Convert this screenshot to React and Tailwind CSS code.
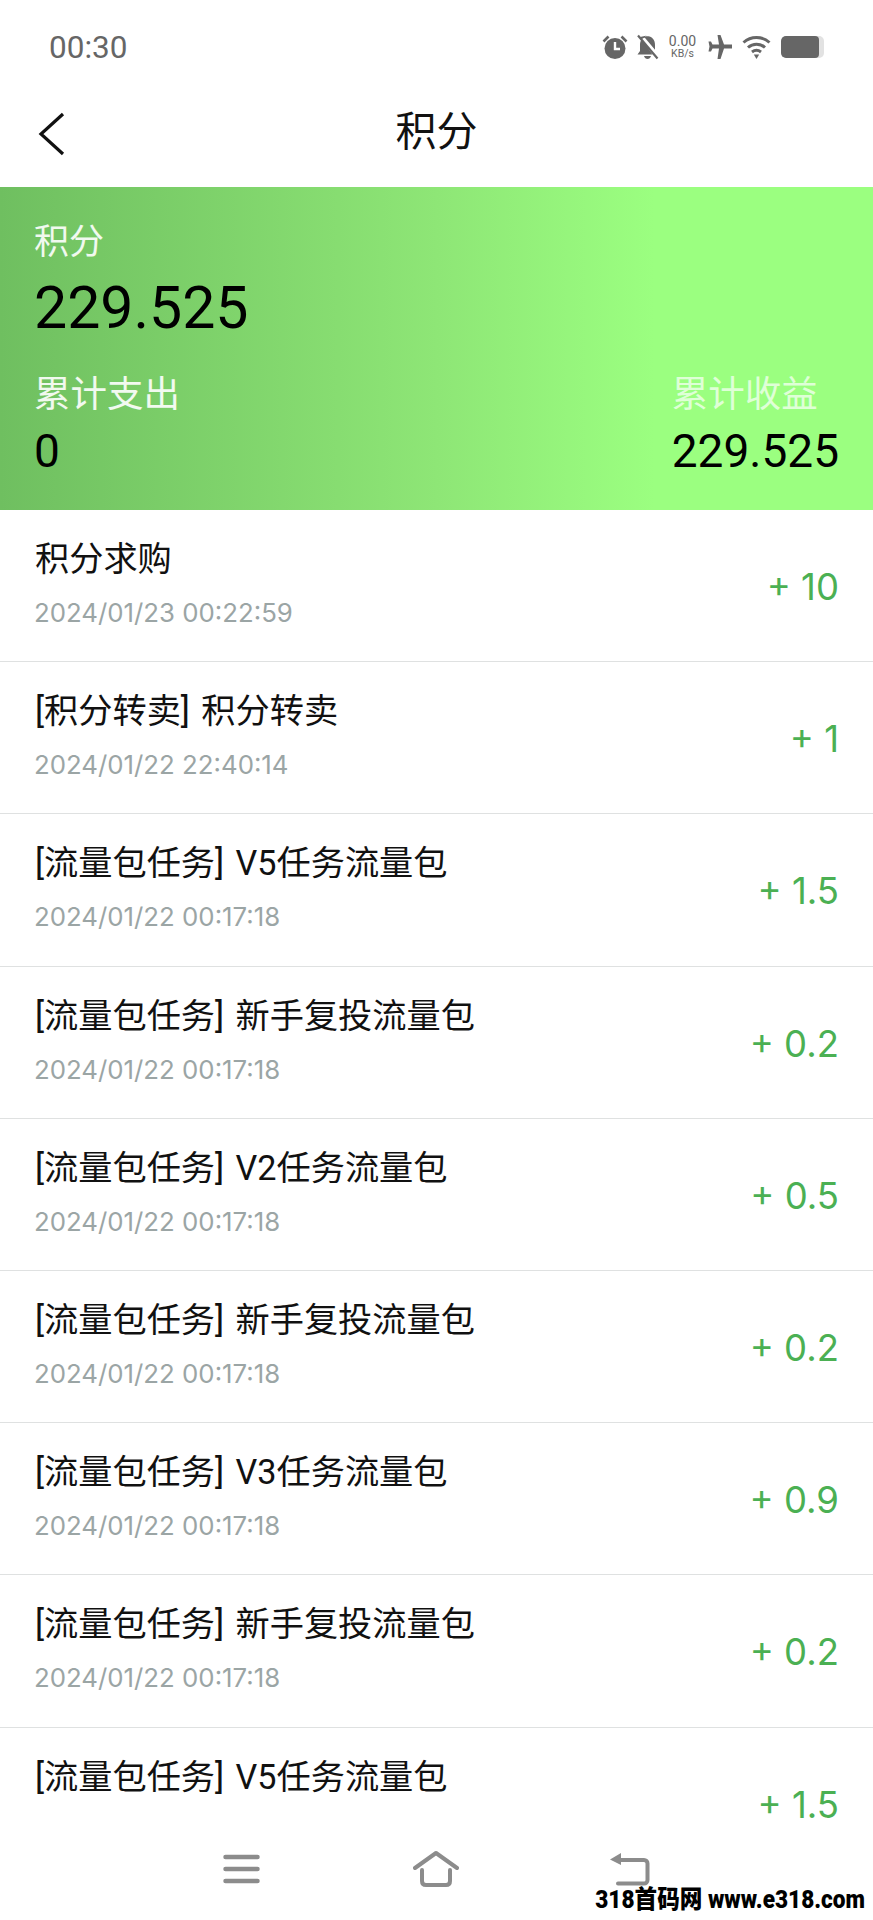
const FONT = 'font-[Roboto,"Noto_Sans_CJK_SC",sans-serif]';
const NARROW_ONE = 'font-[Inter,"Noto_Sans_CJK_SC",sans-serif]';

// the bottom bar covers the date of the last row, so it has none and is shorter
const records = [
  { title: '积分求购', time: '2024/01/23 00:22:59', amount: '+ 10' },
  { title: '[积分转卖] 积分转卖', time: '2024/01/22 22:40:14', amount: '+ 1' },
  { title: '[流量包任务] V5任务流量包', time: '2024/01/22 00:17:18', amount: '+ 1.5' },
  { title: '[流量包任务] 新手复投流量包', time: '2024/01/22 00:17:18', amount: '+ 0.2' },
  { title: '[流量包任务] V2任务流量包', time: '2024/01/22 00:17:18', amount: '+ 0.5' },
  { title: '[流量包任务] 新手复投流量包', time: '2024/01/22 00:17:18', amount: '+ 0.2' },
  { title: '[流量包任务] V3任务流量包', time: '2024/01/22 00:17:18', amount: '+ 0.9' },
  { title: '[流量包任务] 新手复投流量包', time: '2024/01/22 00:17:18', amount: '+ 0.2' },
  { title: '[流量包任务] V5任务流量包', time: '', amount: '+ 1.5' },
];

function StatusIcons() {
  return (
    <div className="flex items-center text-[#666666]">
      {/* alarm */}
      <svg width="26" height="26" viewBox="0 0 26 26" className="mr-[8px]">
        <circle cx="13" cy="14.5" r="10.5" fill="currentColor" />
        <path d="M13 8v7h5" fill="none" stroke="#fff" strokeWidth="2.4" />
        <path d="M1.5 7.5 6.5 2.5M24.5 7.5l-5-5" fill="none" stroke="currentColor" strokeWidth="2.6" />
      </svg>
      {/* muted bell */}
      <svg width="23" height="26" viewBox="0 0 23 26" className="mr-[8px]">
        <path d="M11 1.5c-1.2 0-2 .8-2 2C5.500 4.500 4 7.500 4 11v6l-2.500 3.500h15L4 3z" fill="currentColor" />
        <path d="M8 2.800c1-.5 5-1.500 8 1 2.500 2 3 5 3 7.500v4.500z" fill="currentColor" />
        <path d="M8 22h7c-.5 2-2 3-3.500 3S8.500 24 8 22z" fill="currentColor" />
        <path d="M2 1.500 21.500 24.500" stroke="currentColor" strokeWidth="2.2" />
      </svg>
      {/* network speed */}
      <div className="w-[31px] mr-[10px] flex flex-col items-center leading-none">
        <span className="text-[14px] leading-[14px]">0.00</span>
        <span className="text-[10.500px] leading-[12px]">KB/s</span>
      </div>
      {/* airplane */}
      <svg width="24" height="26" viewBox="0 0 24 26" className="mr-[10px]">
        <path d="M9.500 1H12.500L16 10.500H24V14.500H16L12.500 25H9.500L11 14.500H4.500L3 17.500H.5L1.500 12.500.5 7.500H3L4.500 10.500H11z" fill="currentColor" />
      </svg>
      {/* wifi */}
      <svg width="29" height="24" viewBox="0 0 29 24" className="mr-[10px]">
        <path d="M1.500 7.500C9 .8 20 .8 27.500 7.500M6 12.500c5-4.500 12-4.500 17 0M10 17c2.800-2.200 6.200-2.200 9 0" fill="none" stroke="currentColor" strokeWidth="3" />
        <path d="M11.800 19.500h5.400L14.500 24z" fill="currentColor" />
      </svg>
      {/* battery */}
      <div className="w-[43px] h-[22px] rounded-[5px] bg-[#e2e2e2] overflow-hidden">
        <div className="w-[38px] h-full rounded-[4px] bg-[#666666]" />
      </div>
    </div>
  );
}

function RecordRow({ record }) {
  return (
    <div className={`${record.time ? 'h-[152.200px] border-b border-[#dfe1e1]' : 'h-[92px]'} shrink-0 flex items-start justify-between pl-[34px] pr-[34px]`}>
      <div className="pt-[28px]">
        <div className="pl-[1px] text-[34.200px] leading-[42px] text-[#111111] [word-spacing:3px]">{record.title}</div>
        {record.time && (
          <div className={`mt-[13px] text-[25.800px] leading-[40px] text-[#9ba5a5] ${NARROW_ONE}`}>{record.time}</div>
        )}
      </div>
      <div className={`mt-[63px] text-[36.500px] leading-[28px] text-[#4bb053] ${NARROW_ONE}`}>{record.amount}</div>
    </div>
  );
}

export default function App() {
  return (
    <div className={`relative w-[873px] h-[1920px] bg-white flex flex-col overflow-hidden ${FONT}`}>
      <div className="h-[94px] shrink-0 flex items-center justify-between pl-[49px] pr-[49px]">
        <span className="pt-[2px] text-[31.500px] text-[#666666]">00:30</span>
        <StatusIcons />
      </div>

      <div className="h-[93px] shrink-0 relative flex items-center justify-center pb-[16px]">
        <svg width="30" height="44" viewBox="0 0 30 44" className="absolute left-[37px] top-[18px] text-[#111111]">
          <path d="M26 2 4 22l22 20" fill="none" stroke="currentColor" strokeWidth="3.200" />
        </svg>
        <span className="text-[41px] text-[#111111]">积分</span>
      </div>

      <div className="h-[323px] shrink-0 bg-gradient-to-r from-[#6fbf60] via-[#8ee676] via-50% to-[#9bff80] to-75% pl-[34px] pr-[34px] pt-[34px]">
        <div className="text-[35px] leading-[44px] text-white/90">积分</div>
        <div className="mt-[8px] text-[59px] leading-[70px] text-black">229.525</div>
        <div className="mt-[29px] flex justify-between">
          <div>
            <div className="text-[36.500px] leading-[46px] text-white/90">累计支出</div>
            <div className="mt-[6px] text-[46px] leading-[54px] text-black">0</div>
          </div>
          <div>
            <div className="text-[36.500px] leading-[46px] text-white/70">累计收益</div>
            <div className="mt-[6px] text-[46px] leading-[54px] text-black">229.525</div>
          </div>
        </div>
      </div>

      <div className="flex-1">
        {records.map((record, i) => (
          <RecordRow key={i} record={record} />
        ))}
      </div>

      <div className="h-[100px] shrink-0 bg-white flex items-center justify-center gap-[151px] pb-[2px] text-[#8c8c8c]">
        <svg width="37" height="30" viewBox="0 0 37 30">
          <path d="M2.500 3h32M2.500 15h32M2.500 27h32" fill="none" stroke="currentColor" strokeWidth="4.500" strokeLinecap="round" />
        </svg>
        <svg width="46" height="36" viewBox="0 0 46 36" className="ml-[2px]">
          <path d="M2 17 23 2l21 15" fill="none" stroke="currentColor" strokeWidth="4" strokeLinecap="round" strokeLinejoin="round" />
          <path d="M9 19v11c0 2.500 1.500 4 4 4h20c2.500 0 4-1.500 4-4V19" fill="none" stroke="currentColor" strokeWidth="4" strokeLinecap="round" />
        </svg>
        <svg width="40" height="34" viewBox="0 0 40 34">
          <path d="M8 8h26c2 0 3.500 1.500 3.500 3.500V28c0 2-1.500 3.500-3.500 3.500H8" fill="none" stroke="currentColor" strokeWidth="4" strokeLinecap="round" />
          <path d="M0 7.500 11 1v12z" fill="currentColor" />
        </svg>
      </div>

      <div className="absolute right-[8px] bottom-[4px] text-[22.600px] leading-[28px] font-black whitespace-nowrap text-black origin-bottom scale-y-[1.1]">
        318首码网 www.e318.com
      </div>
    </div>
  );
}
